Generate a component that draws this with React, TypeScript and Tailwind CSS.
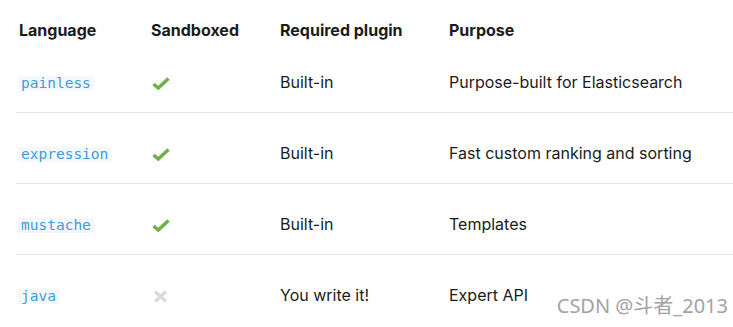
const rows = [
  { lang: "painless", sandboxed: true, plugin: "Built-in", purpose: "Purpose-built for Elasticsearch" },
  { lang: "expression", sandboxed: true, plugin: "Built-in", purpose: "Fast custom ranking and sorting" },
  { lang: "mustache", sandboxed: true, plugin: "Built-in", purpose: "Templates" },
  { lang: "java", sandboxed: false, plugin: "You write it!", purpose: "Expert API" },
];

const Check = () => (
  <svg width="18" height="13" viewBox="0 0 18 13" className="mt-[5px] ml-px">
    <path d="M1.5 7 L6.3 11 L16.5 1.5" fill="none" stroke="#6db147" strokeWidth="3.5" strokeLinejoin="miter" />
  </svg>
);

const Cross = () => (
  <svg width="15" height="13" viewBox="0 0 15 13" className="mt-[5px] ml-[2px]">
    <path d="M2 1.5 L13 11.5 M13 1.5 L2 11.5" fill="none" stroke="#dcdcdc" strokeWidth="3.6" />
  </svg>
);

const App = () => {
  return (
    <div className="relative w-[733px] h-[327px] bg-white overflow-hidden text-[16px] leading-5 text-[#1a1c21]" style={{ fontFamily: "Inter, 'Noto Sans', sans-serif" }}>
      <div className="ml-[16px]">
        <div className="grid grid-cols-[135px_129px_169px_1fr] pt-[20px] pb-[2px] font-bold">
          <div className="pl-[3px]">Language</div>
          <div>Sandboxed</div>
          <div>Required plugin</div>
          <div>Purpose</div>
        </div>
        {rows.map((row) => (
          <div key={row.lang} className="grid grid-cols-[135px_129px_169px_1fr] pt-[30px] pb-[20px] border-b border-[#e4e6ea] last:border-b-0">
            <div className="pl-[2px]">
              <code className="inline-block px-[3px] h-[15px] mt-[3px] leading-[15px] bg-[#f5f7fa] text-[#3a9ee0] text-[14.5px]" style={{ fontFamily: "'DejaVu Sans Mono', monospace" }}>
                {row.lang}
              </code>
            </div>
            <div>{row.sandboxed ? <Check /> : <Cross />}</div>
            <div>{row.plugin}</div>
            <div>{row.purpose}</div>
          </div>
        ))}
      </div>
      <div className="absolute right-[5px] bottom-[9px] text-[20px] leading-6 text-[#a3a3a3]" style={{ fontFamily: "'Noto Sans', 'Noto Sans CJK SC', sans-serif" }}>
        CSDN @斗者_2013
      </div>
    </div>
  );
};

export default App;
